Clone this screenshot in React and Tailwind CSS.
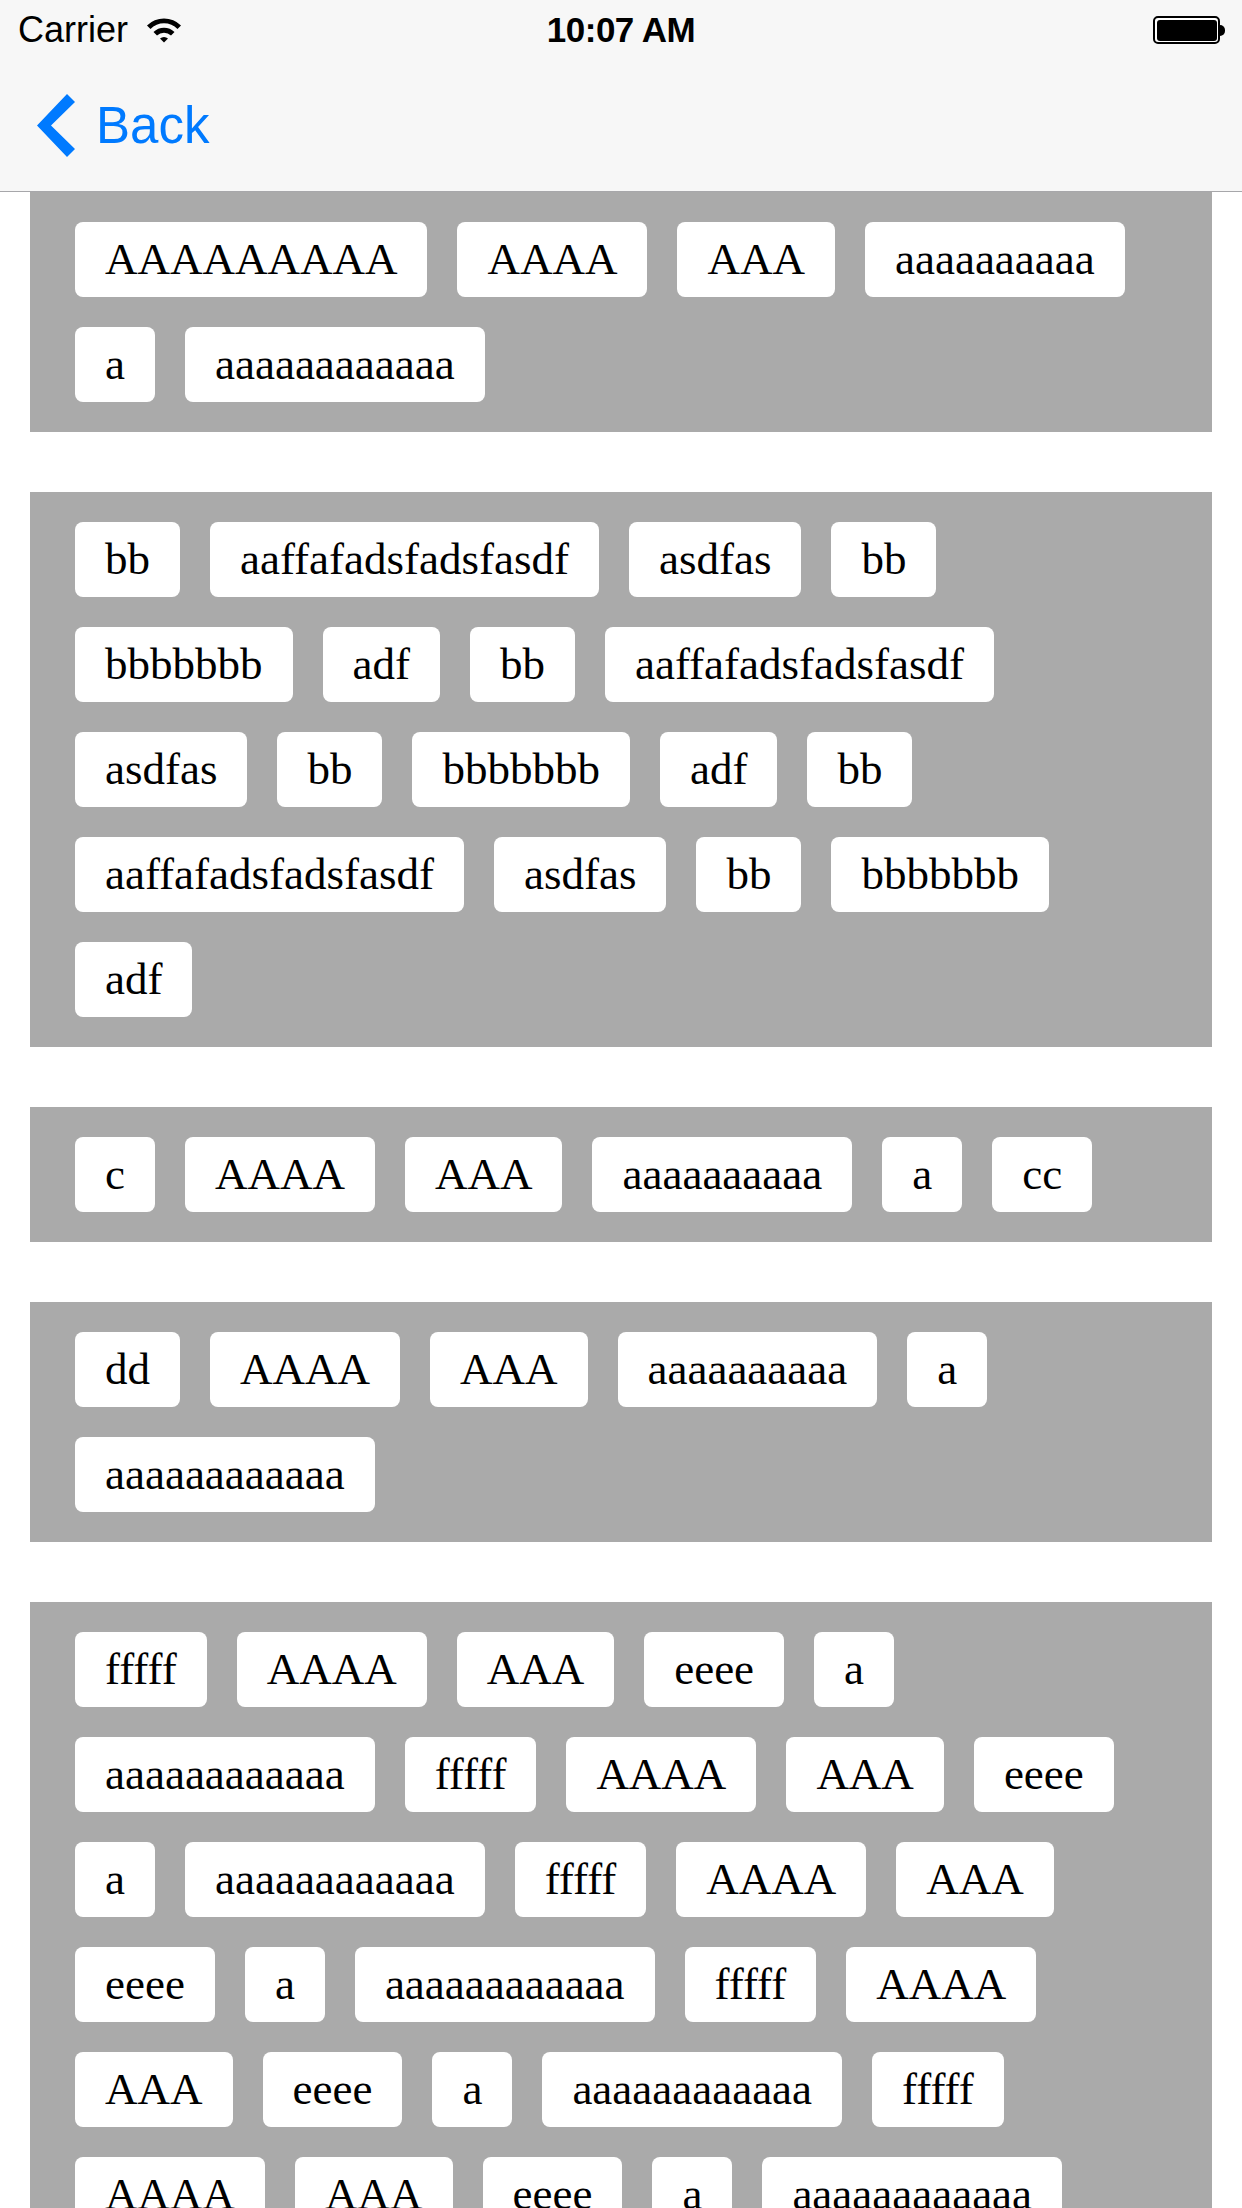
const sections = [
  ["AAAAAAAAA", "AAAA", "AAA", "aaaaaaaaaa", "a", "aaaaaaaaaaaa"],
  [
    "bb", "aaffafadsfadsfasdf", "asdfas", "bb", "bbbbbbb", "adf",
    "bb", "aaffafadsfadsfasdf", "asdfas", "bb", "bbbbbbb", "adf",
    "bb", "aaffafadsfadsfasdf", "asdfas", "bb", "bbbbbbb", "adf",
  ],
  ["c", "AAAA", "AAA", "aaaaaaaaaa", "a", "cc"],
  ["dd", "AAAA", "AAA", "aaaaaaaaaa", "a", "aaaaaaaaaaaa"],
  Array.from({ length: 8 }).flatMap(() => ["fffff", "AAAA", "AAA", "eeee", "a", "aaaaaaaaaaaa"]),
];

function WifiIcon() {
  return (
    <svg width="36" height="26" viewBox="0 0 36 26">
      <path d="M1 8.5 A24 24 0 0 1 35 8.5 L31.5 12 A19 19 0 0 0 4.5 12 Z" fill="#000" />
      <path d="M7.5 15 A15 15 0 0 1 28.5 15 L25 18.5 A10 10 0 0 0 11 18.5 Z" fill="#000" />
      <path d="M14 21.5 A6 6 0 0 1 22 21.5 L18 25.5 Z" fill="#000" />
    </svg>
  );
}

function Battery() {
  return (
    <div className="flex items-center">
      <div className="w-[67px] h-[28px] rounded-[5px] border-2 border-black bg-white p-[1.5px]">
        <div className="w-full h-full rounded-[3px] bg-black" />
      </div>
      <div className="w-[5px] h-[11px] bg-black rounded-r-full" />
    </div>
  );
}

function Tag({ text }) {
  return (
    <div className="h-[75px] px-[30px] flex items-center bg-white rounded-[8px] text-black text-[45px] leading-none font-['Liberation_Serif',serif] whitespace-nowrap">
      {text}
    </div>
  );
}

export default function App() {
  return (
    <div className="w-[1242px] h-[2208px] overflow-hidden bg-white relative">
      <div className="h-[192px] bg-[#f7f7f7] border-b border-[#a7a7aa] flex flex-col">
        <div className="h-[60px] relative flex items-center pl-[18px] pr-[17px] font-['Liberation_Sans',sans-serif] text-[36px] text-black">
          <div className="flex items-center gap-[18px]">
            <span className="leading-none">Carrier</span>
            <WifiIcon />
          </div>
          <div className="absolute left-0 right-0 text-center font-bold text-[35px] tracking-[-0.5px]">10:07 AM</div>
          <div className="ml-auto">
            <Battery />
          </div>
        </div>
        <div className="flex-1 flex items-center pl-[37px]">
          <svg width="38" height="63" viewBox="0 0 38 63">
            <polygon points="0,31.5 30,0 38,8 14,31.5 38,55 30,63" fill="#007aff" />
          </svg>
          <span className="ml-[21px] text-[51px] text-[#007aff] font-['Liberation_Sans',sans-serif] leading-none">Back</span>
        </div>
      </div>

      <div className="flex flex-col gap-[60px] px-[30px]">
        {sections.map((tags, i) => (
          <div key={i} className="bg-[#aaaaaa] px-[45px] py-[30px] flex flex-wrap gap-[30px]">
            {tags.map((t, j) => (
              <Tag key={j} text={t} />
            ))}
          </div>
        ))}
      </div>
    </div>
  );
}
